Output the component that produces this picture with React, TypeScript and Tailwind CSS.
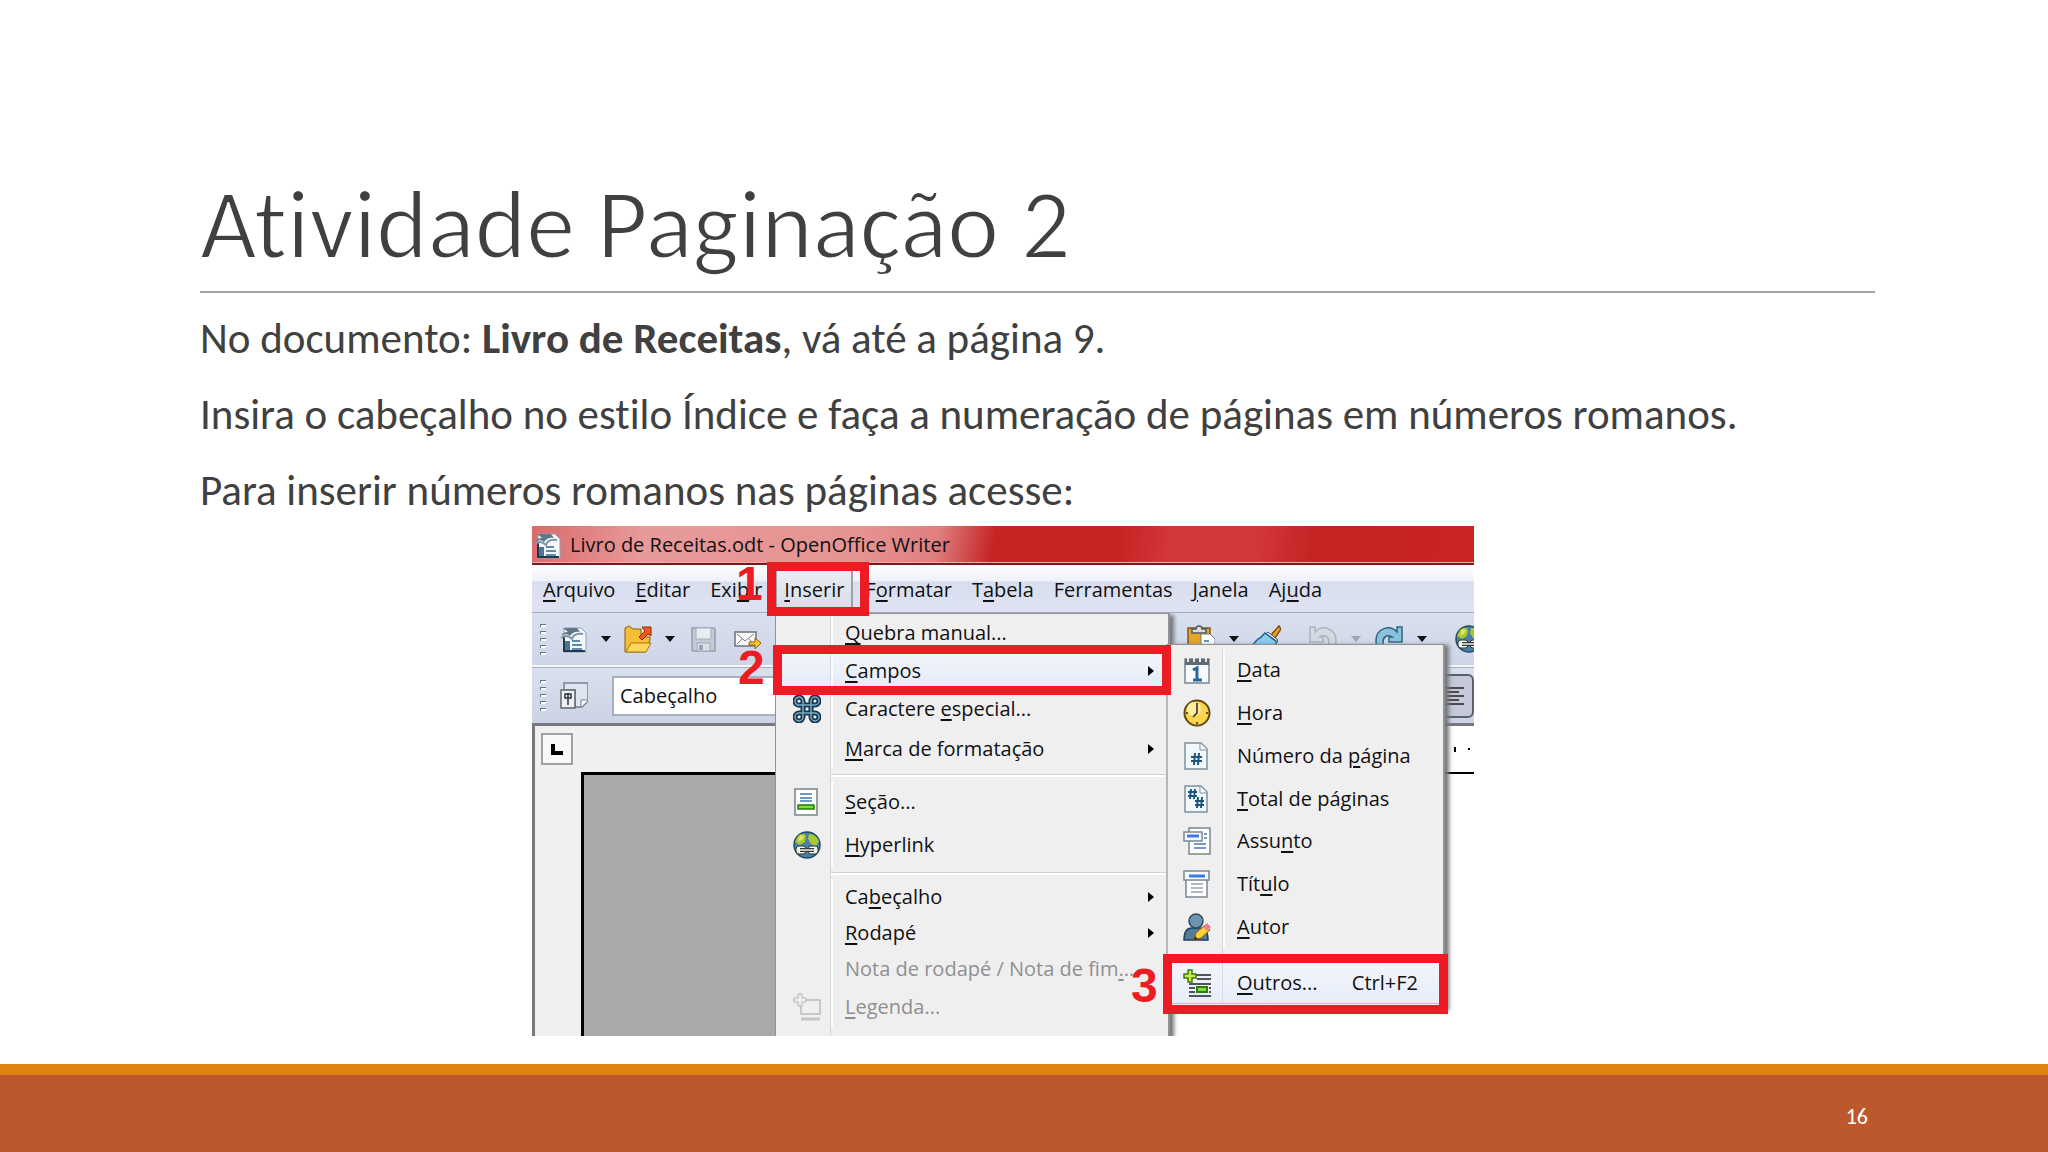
import type { ReactNode } from "react";

type IconProps = { children: ReactNode; className?: string };

function Icon({ children, className = "" }: IconProps) {
  return (
    <svg viewBox="0 0 28 28" className={`size-7 shrink-0 ${className}`} fill="none" aria-hidden="true">
      {children}
    </svg>
  );
}

const WriterDoc = () => (
  <Icon>
    <path d="M4 3h17l5 5v19H4z" fill="#f4f8fb" stroke="#8fa3b3" />
    <path d="M4 12v14h21" stroke="#20394c" strokeWidth="2" />
    <path d="M3 3h14l3 4c-5-1-8 1-10 4-2-2-5-2-9-1 2-2 4-3 7-3z" fill="#5f7787" />
    <path d="M1 13c4-3 8-2 11 1 1-4 5-6 11-5" stroke="#7e96a6" strokeWidth="2" />
    <path d="M5 16h5v9H5z" fill="#4d7695" />
    <path d="M12 16h8M12 20h10M12 24h10" stroke="#2c6594" strokeWidth="1.5" />
  </Icon>
);

const Folder = () => (
  <Icon>
    <path d="M1 27V3l4-2 4 3h8v8h9v3l-5 12z" fill="#f7bd35" stroke="#8a5a0c" />
    <path d="M2 27l5-9h20l-5 9z" fill="#ffd65c" stroke="#a8760f" />
    <path d="M18 2h9v9l-3-2-6 6-3-3 6-6z" fill="#f2571b" stroke="#8a2c0a" />
  </Icon>
);

const Save = () => (
  <Icon>
    <path d="M2 3h22l1 1v22H3l-1-1z" fill="#c5cad6" stroke="#979daa" strokeWidth="1.5" />
    <path d="M6 3h15v11H6z" fill="#e9ecf3" stroke="#a5abb8" />
    <path d="M7 18h13v8H7z" fill="#dde0e8" stroke="#a0a6b2" />
    <path d="M9 20h4v5H9z" fill="#9ba1ae" />
  </Icon>
);

const Mail = () => (
  <Icon>
    <path d="M1 7h21v14H1z" fill="#fafafa" stroke="#6c7379" strokeWidth="1.5" />
    <path d="M3 9l8 7 9-7M3 19l5-5M20 19l-5-5" stroke="#7d8489" />
    <path d="M15 17h6v-4l6 5-6 6v-4h-6z" fill="#ffc629" stroke="#946106" />
  </Icon>
);

const StyleIcon = () => (
  <Icon>
    <path d="M4 1h24v18l-6 6H15V8H4z" fill="#dfe4ee" stroke="#76818c" strokeWidth="1.5" />
    <path d="M21 25v-7h7" fill="#fff" stroke="#76818c" />
    <path d="M1 8h14v18H1z" fill="#eef0f4" stroke="#5e6872" strokeWidth="1.5" />
    <path d="M8 11v12M5 12h6v4H5z" stroke="#2d353c" strokeWidth="1.5" />
  </Icon>
);

const Clipboard = () => (
  <Icon>
    <path d="M1 3h22v25H1z" fill="#e4a529" stroke="#80561a" strokeWidth="1.5" />
    <path d="M5 8V4h4c0-4 6-4 6 0h4v4z" fill="#d8dcdf" stroke="#52585c" strokeWidth="1.5" />
    <path d="M14 9h9l5 5v14H14z" fill="#fff" stroke="#6c7e8b" />
    <path d="M17 16h5" stroke="#37719c" strokeWidth="1.5" />
  </Icon>
);

const Brush = () => (
  <Icon>
    <path d="M18 10L26 1l2 3-6 9z" fill="#eda42b" stroke="#7e4d10" strokeWidth="1.5" />
    <path d="M15 7l10 8-3 3-10-8z" fill="#e9eef1" stroke="#4c5b66" />
    <path d="M12 8l12 9-9 11H3l-3-9c2-1 3-3 5-5 2 0 4-3 7-6z" fill="#8cccf0" stroke="#215f8e" strokeWidth="1.5" />
  </Icon>
);

const Turn = ({ muted = false }: { muted?: boolean }) => (
  <Icon className={muted ? "-scale-x-100" : ""}>
    <path
      d="M22 7V2h5v15H14v-5h3c-5-3-9 0-9 5 0 4 2 6 5 8v2H5C2 24 1 21 1 16 1 3 15-1 22 7z"
      fill={muted ? "#d5d9e2" : "#8cc2de"}
      stroke={muted ? "#aeb3be" : "#2e6580"}
      strokeWidth="1.5"
    />
  </Icon>
);

const Globe = () => (
  <Icon>
    <circle cx="14" cy="14" r="13" fill="#477fa6" stroke="#294d68" strokeWidth="1.5" />
    <path d="M5 5c4-3 7-3 8 0l-1 6-5 3-5-3zM16 3c5 0 8 3 10 7l-3 5-5-2-3-5z" fill="#a9c92f" />
    <path d="M7 4l4 1-2 4-4 1z" fill="#e1e85b" />
    <rect x="3" y="15" width="10" height="8" rx="3" fill="#f4f4ea" stroke="#333b3a" />
    <rect x="15" y="15" width="10" height="8" rx="3" fill="#f4f4ea" stroke="#333b3a" />
    <path d="M7 19h14" stroke="#333b3a" strokeWidth="4" />
    <path d="M7 19h14" stroke="#f4f4ea" strokeWidth="1.5" />
  </Icon>
);

const loops = (
  <>
    <path d="M10 10h8v8h-8z" />
    <path d="M10 10H7a4 4 0 1 1 3-4zM18 10V6a4 4 0 1 1 4 4zM10 18v4a4 4 0 1 1-4-4zM18 18h4a4 4 0 1 1-4 4z" />
  </>
);

const Special = () => (
  <Icon>
    <g stroke="#17384f" strokeWidth="5">{loops}</g>
    <g stroke="#7ba8c4" strokeWidth="1.5">{loops}</g>
  </Icon>
);

const Section = () => (
  <Icon>
    <path d="M2 1h22v26H2z" fill="#fff" stroke="#76848f" strokeWidth="1.5" />
    <path d="M7 6h12M7 10h12M7 13h12" stroke="#3a78b5" strokeWidth="1.5" />
    <path d="M5 17h16v4H5z" fill="#7ee02c" stroke="#237a0b" strokeWidth="1.5" />
  </Icon>
);

const Caption = () => (
  <Icon>
    <path d="M8 7h19v14H8z" stroke="#bcbcbc" strokeWidth="1.5" />
    <path d="M5 1h4v4h4v4H9v4H5V9H1V5h4z" fill="#efeff0" stroke="#b5b5b5" />
    <path d="M8 26h19" stroke="#c4c4c4" strokeWidth="3" />
  </Icon>
);

const Calendar = () => (
  <Icon>
    <path d="M2 3h24v24H2z" fill="#f8fafb" stroke="#7a8790" strokeWidth="1.5" />
    <path d="M2 3h24v6H2z" fill="#5c6b75" />
    <path d="M5 1v5M11 1v5M17 1v5M23 1v5" stroke="#e6e9ea" strokeWidth="2" />
    <path d="M10 14l4-2v12M10 24h9" stroke="#25699d" strokeWidth="3" />
  </Icon>
);

const Clock = () => (
  <Icon>
    <circle cx="14" cy="14" r="12.5" fill="#fbd54d" stroke="#60480f" strokeWidth="2" />
    <circle cx="11" cy="10" r="7" fill="#ffeda0" />
    <path d="M14 4v10l-4 4M3 14h2M23 14h2M14 23v2" stroke="#2c2410" strokeWidth="1.5" />
  </Icon>
);

const PageHash = ({ many = false }: { many?: boolean }) => (
  <Icon>
    <path d="M2 1h16l6 6v20H2z" fill="#f2f8fc" stroke="#7d919f" strokeWidth="1.5" />
    <path d="M17 1v7h7" fill="#fff" stroke="#7d919f" />
    {many ? (
      <path
        d="M8 4l-1 10M12 4l-1 10M5 7h9M5 11h9M15 12l-1 11M19 12l-1 11M12 16h9M12 20h9"
        stroke="#1b5680"
        strokeWidth="2"
      />
    ) : (
      <path d="M12 11l-1 12M16 11l-1 12M8 15h11M8 19h11" stroke="#1b5680" strokeWidth="2" />
    )}
  </Icon>
);

const Subject = () => (
  <Icon>
    <path d="M6 1h21v26H6z" fill="#fff" stroke="#7a8691" strokeWidth="1.5" />
    <path d="M21 7h3M21 11h3M11 17h12M11 21h12" stroke="#4577bd" strokeWidth="1.5" />
    <path d="M1 5h18v9H1z" fill="#f7fafd" stroke="#7a8691" strokeWidth="1.5" />
    <path d="M4 9h12" stroke="#3b7ae6" strokeWidth="3" />
  </Icon>
);

const TitleIcon = () => (
  <Icon>
    <path d="M3 6h21v21H3z" fill="#fff" stroke="#7a8691" strokeWidth="1.5" />
    <path d="M8 14h12M8 18h12M8 22h12" stroke="#9aa2ab" strokeWidth="1.5" />
    <path d="M1 1h25v9H1z" fill="#f7fafd" stroke="#7a8691" strokeWidth="1.5" />
    <path d="M6 6h16" stroke="#3b7ae6" strokeWidth="3" />
  </Icon>
);

const Author = () => (
  <Icon>
    <path d="M1 27c0-9 3-12 8-12h8c5 0 8 4 8 12z" fill="#557b98" stroke="#213f55" strokeWidth="1.5" />
    <circle cx="13" cy="8" r="7" fill="#6f93ad" stroke="#2b4b62" strokeWidth="1.5" />
    <path d="M11 27l2-7 9-8 5 5-9 8z" fill="#ffd338" stroke="#8d5d13" />
    <path d="M20 14l4-4 4 4-4 4z" fill="#f07c86" />
    <path d="M11 27l1-4 3 3z" fill="#3c2b16" />
  </Icon>
);

const Others = () => (
  <Icon>
    <path d="M13 6h15M14 10h14M6 15h22M6 19h6M26 19h2M6 23h6M26 23h2M6 27h22" stroke="#1d2326" strokeWidth="1.5" />
    <path d="M14 18h10v5H14z" fill="#8bdc36" stroke="#2b7d0c" strokeWidth="2" />
    <path d="M5 1h4v4h4v4H9v4H5V9H1V5h4z" fill="#cbea42" stroke="#3a7e12" strokeWidth="1.5" />
  </Icon>
);

/* Label with its keyboard accelerator between underscores, e.g. "_A_rquivo". */
function Label({ text }: { text: string }) {
  const [before, key, after] = text.split("_");
  return (
    <span className="whitespace-nowrap">
      {before}
      <span className="underline decoration-2 underline-offset-3">{key}</span>
      {after}
    </span>
  );
}

function Handle() {
  return (
    <span className="flex w-5 shrink-0 flex-col gap-1">
      {[0, 1, 2, 3, 4].map((n) => (
        <span key={n} className="h-[3px] w-[6px] border-t border-l border-[#6d7583] bg-white" />
      ))}
    </span>
  );
}

function Caret({ muted = false }: { muted?: boolean }) {
  return (
    <svg viewBox="0 0 10 6" className="h-[6px] w-[10px] shrink-0" aria-hidden="true">
      <path d="M0 0h10L5 6z" fill={muted ? "#a0a5b0" : "#111"} />
    </svg>
  );
}

const tool = (label: string, icon: ReactNode) => (
  <button type="button" aria-label={label} className="shrink-0">
    {icon}
  </button>
);

const menus = ["_A_rquivo", "_E_ditar", "Exi_b_ir", "_I_nserir", "F_o_rmatar", "T_a_bela", "Ferramentas__", "_J_anela", "Aj_u_da"];

type Item = { text: string; h: string; icon?: ReactNode; arrow?: boolean; muted?: boolean; active?: boolean; split?: boolean };

const insertItems: Item[] = [
  { text: "_Q_uebra manual...", h: "h-[38px]" },
  { text: "_C_ampos", h: "h-[37px]", arrow: true, active: true },
  { text: "Caractere _e_special...", h: "h-10", icon: <Special /> },
  { text: "_M_arca de formatação", h: "h-10", arrow: true },
  { text: "_S_eção...", h: "h-[42px]", icon: <Section />, split: true },
  { text: "_H_yperlink", h: "h-[44px]", icon: <Globe /> },
  { text: "Ca_b_eçalho", h: "h-9", arrow: true, split: true },
  { text: "_R_odapé", h: "h-9", arrow: true },
  { text: "Nota de rodapé / Nota de fim_._..", h: "h-9", muted: true },
  { text: "_L_egenda...", h: "h-10", icon: <Caption />, muted: true },
];

const fieldItems = [
  { text: "_D_ata", icon: <Calendar /> },
  { text: "_H_ora", icon: <Clock /> },
  { text: "Número da _p_ágina", icon: <PageHash /> },
  { text: "_T_otal de páginas", icon: <PageHash many /> },
  { text: "Assu_n_to", icon: <Subject /> },
  { text: "Tít_u_lo", icon: <TitleIcon /> },
  { text: "_A_utor", icon: <Author /> },
];

function InsertMenu() {
  return (
    <div className="absolute top-[87px] left-[243px] h-[423px] w-[404px] overflow-hidden">
      <div role="menu" className="flex h-[430px] w-[395px] flex-col border-t border-r-2 border-l border-[#8f9296] bg-[#efeff0] shadow-[4px_2px_4px_0px_#777]">
        {insertItems.map((it) => (
          <div key={it.text} className="flex flex-col">
            {it.split && (
              <div className="flex h-3">
                <span className="w-[55px] border-r border-[#d8d8da]" />
                <span className="mt-[5px] h-[3px] flex-1 border-t border-[#d0d0d2] bg-white" />
              </div>
            )}
            <button
              type="button"
              role="menuitem"
              disabled={it.muted}
              className={`flex items-center text-left ${it.h} ${it.muted ? "text-[#8f8f91]" : "text-[#111]"} ${it.active ? "bg-linear-to-b from-[#f3f5fa] to-[#e3ebf8]" : ""}`}
            >
              <span className="flex w-[55px] shrink-0 items-center justify-center self-stretch border-r border-[#d8d8da] pl-2">{it.icon}</span>
              <span className="flex flex-1 items-center justify-between self-stretch border-l-2 border-white/80 pr-[14px] pl-3">
                <Label text={it.text} />
                {it.arrow && (
                  <svg viewBox="0 0 6 10" className="h-[10px] w-[6px]" aria-hidden="true">
                    <path d="M0 0l6 5-6 5z" fill="#000" />
                  </svg>
                )}
              </span>
            </button>
          </div>
        ))}
        <div className="w-[55px] flex-1 border-r border-[#d8d8da]" />
      </div>
    </div>
  );
}

function FieldsMenu() {
  return (
    <div role="menu" className="absolute top-[118px] left-[634px] flex h-[368px] w-[279px] flex-col border-2 border-t border-[#909396] border-l-[#b5b7ba] bg-[#efeff0] pt-1 shadow-[5px_0px_4px_-1px_#777]">
      <div className="flex h-[299px] flex-col">
        {fieldItems.map((it) => (
          <button key={it.text} type="button" role="menuitem" className="flex flex-1 items-center text-left">
            <span className="flex w-[55px] shrink-0 items-center justify-center self-stretch border-r border-[#d8d8da] pl-1">{it.icon}</span>
            <span className="flex flex-1 items-center self-stretch border-l-2 border-white/80 pl-3">
              <Label text={it.text} />
            </span>
          </button>
        ))}
      </div>
      <div className="h-[14px] w-[55px] border-r border-[#d8d8da]" />
      <button type="button" role="menuitem" className="flex h-[42px] items-center border-b border-[#a9c4ee] bg-linear-to-b from-[#f3f5fa] to-[#e6edf9] text-left">
        <span className="flex w-[55px] shrink-0 items-center justify-center self-stretch border-r border-[#d8dce4] pl-1">
          <Others />
        </span>
        <span className="flex flex-1 items-center justify-between pr-[25px] pl-[14px]">
          <Label text="_O_utros..." />
          <span>Ctrl+F2</span>
        </span>
      </button>
    </div>
  );
}

function WriterWindow() {
  return (
    <figure
      aria-label="Menu Inserir do OpenOffice Writer"
      className="relative ml-[332px] flex h-[510px] w-[942px] flex-col bg-white font-['Open_Sans','Noto_Sans',sans-serif] text-[20px] leading-6 text-[#111]"
    >
      <div className="flex h-[36px] items-center gap-2 bg-[linear-gradient(100deg,#d96a6c_0%,#e89a9a_12%,#e69393_35%,#df7f80_43%,#c62424_49%,#c62323_62%,#d2383a_68%,#d13638_77%,#c32323_83%,#cb2425_100%)] pt-[2px] pl-[2px]">
        <WriterDoc />
        <span className="whitespace-nowrap">Livro de Receitas.odt - OpenOffice Writer</span>
      </div>
      <div className="h-[3px] border-t border-[#f0aaaa] bg-[#7a1a1c]" />
      <nav className="flex h-[48px] items-center gap-5 border-b border-[#a3a9ba] bg-[linear-gradient(#ffffff_0%,#eef1f8_34%,#d9deee_36%,#dfe3f3_100%)] pt-[2px] pl-[11px]">
        {menus.map((m) => (
          <button
            key={m}
            type="button"
            className={
              m === "_I_nserir"
                ? "-mr-2 -ml-[6px] self-stretch border-r-2 border-l border-[#9ba1ac] bg-linear-to-b from-[#eceff5] to-[#d5dae6] px-[7px]"
                : ""
            }
          >
            <Label text={m} />
          </button>
        ))}
      </nav>
      <div className="flex h-[54px] items-center border-b-2 border-[#f5f6fa] bg-linear-to-b from-[#d9e0ef] to-[#cdd5e7] pl-2">
        <Handle />
        <div className="flex items-center gap-[13px]">
          {tool("Novo", <WriterDoc />)}
          <Caret />
          {tool("Abrir", <Folder />)}
          <Caret />
          <span className="ml-[2px] flex gap-4">
            {tool("Salvar", <Save />)}
            {tool("E-mail", <Mail />)}
          </span>
        </div>
        <div className="ml-auto flex w-[287px] items-center gap-[14px] overflow-hidden">
          {tool("Colar", <Clipboard />)}
          <Caret />
          {tool("Pincel", <Brush />)}
          <span className="h-9 w-px bg-[#b9bfcd]" />
          {tool("Desfazer", <Turn muted />)}
          <Caret muted />
          {tool("Refazer", <Turn />)}
          <Caret />
          <span className="h-9 w-px bg-[#b9bfcd]" />
          {tool("Hyperlink", <Globe />)}
        </div>
      </div>
      <div className="flex h-[56px] items-center border-t border-[#aab0be] bg-linear-to-b from-[#d9e0ef] to-[#ccd3e4] pl-2">
        <Handle />
        {tool("Estilos", <StyleIcon />)}
        <input
          aria-label="Estilo de parágrafo"
          defaultValue="Cabeçalho"
          className="ml-6 h-10 w-[200px] border-2 border-[#a9afbb] bg-white px-[6px]"
        />
        <button
          type="button"
          aria-label="Alinhar"
          className="ml-auto flex h-[44px] w-[50px] items-center justify-end rounded-md border-2 border-[#5c6170] bg-[#c4c8d8] pr-2"
        >
          <svg viewBox="0 0 20 18" className="h-[18px] w-5" aria-hidden="true">
            <path d="M0 1h20M0 5h15M0 9h20M0 13h15M0 17h20" stroke="#222" strokeWidth="1.5" />
          </svg>
        </button>
      </div>
      <div className="flex flex-1 flex-col border-t-3 border-l-3 border-[#77797d] bg-[#f0f0f1]">
        <div className="flex h-[46px] items-center pl-[6px]">
          <span className="flex size-8 items-center justify-center border-2 border-[#a0a0a2] bg-[#f8f8f8]">
            <span className="h-[11px] w-3 border-b-4 border-l-4 border-black" />
          </span>
          <span className="ml-auto flex h-full w-[120px] items-center justify-end gap-3 bg-white pr-1">
            <span className="h-[5px] w-[2px] bg-black" />
            <span className="size-[2px] bg-black" />
          </span>
        </div>
        <div className="flex flex-1 pl-[46px]">
          <div className="w-[200px] border-t-3 border-l-3 border-black bg-[#a9a9a9]" />
          <div className="flex-1 border-t-2 border-black bg-white" />
        </div>
      </div>

      <InsertMenu />
      <FieldsMenu />

      <div className="absolute top-[36px] left-[235px] h-[54px] w-[102px] border-9 border-[#ed1c24]" />
      <div className="absolute top-[119px] left-[241px] h-[50px] w-[398px] border-9 border-[#ed1c24]" />
      <div className="absolute top-[428px] left-[631px] h-[60px] w-[285px] border-9 border-[#ed1c24]" />
      <div className="absolute top-[33px] left-[204px] font-['Liberation_Sans',sans-serif] text-[48px] leading-[50px] font-bold text-[#ed1c24]">1</div>
      <div className="absolute top-[117px] left-[206px] font-['Liberation_Sans',sans-serif] text-[48px] leading-[50px] font-bold text-[#ed1c24]">2</div>
      <div className="absolute top-[435px] left-[599px] font-['Liberation_Sans',sans-serif] text-[48px] leading-[50px] font-bold text-[#ed1c24]">3</div>
    </figure>
  );
}

export default function App() {
  return (
    <div className="flex min-h-screen flex-col bg-white font-[Carlito,Calibri,Lato,sans-serif] text-[#404040] [font-variant-ligatures:none]">
      <main className="flex-1 pt-[166px] pr-[173px] pl-[200px]">
        <h1 className="border-b-2 border-[#a6a6a6] pb-2 text-[98px] leading-[117px] [-webkit-text-stroke:2px_white]">Atividade Paginação 2</h1>
        <div className="mt-[22px] flex flex-col gap-7 text-[43px] leading-[48px]">
          <p>
            No documento: <strong>Livro de Receitas</strong>, vá até a página 9.
          </p>
          <p>Insira o cabeçalho no estilo Índice e faça a numeração de páginas em números romanos.</p>
          <p>Para inserir números romanos nas páginas acesse:</p>
        </div>
        <div className="pt-[11px]">
          <WriterWindow />
        </div>
      </main>
      <footer className="flex h-[88px] items-center justify-end border-t-11 border-[#e0820f] bg-[#bd582c] pt-[6px] pr-[180px] text-[22px] text-white">
        16
      </footer>
    </div>
  );
}
